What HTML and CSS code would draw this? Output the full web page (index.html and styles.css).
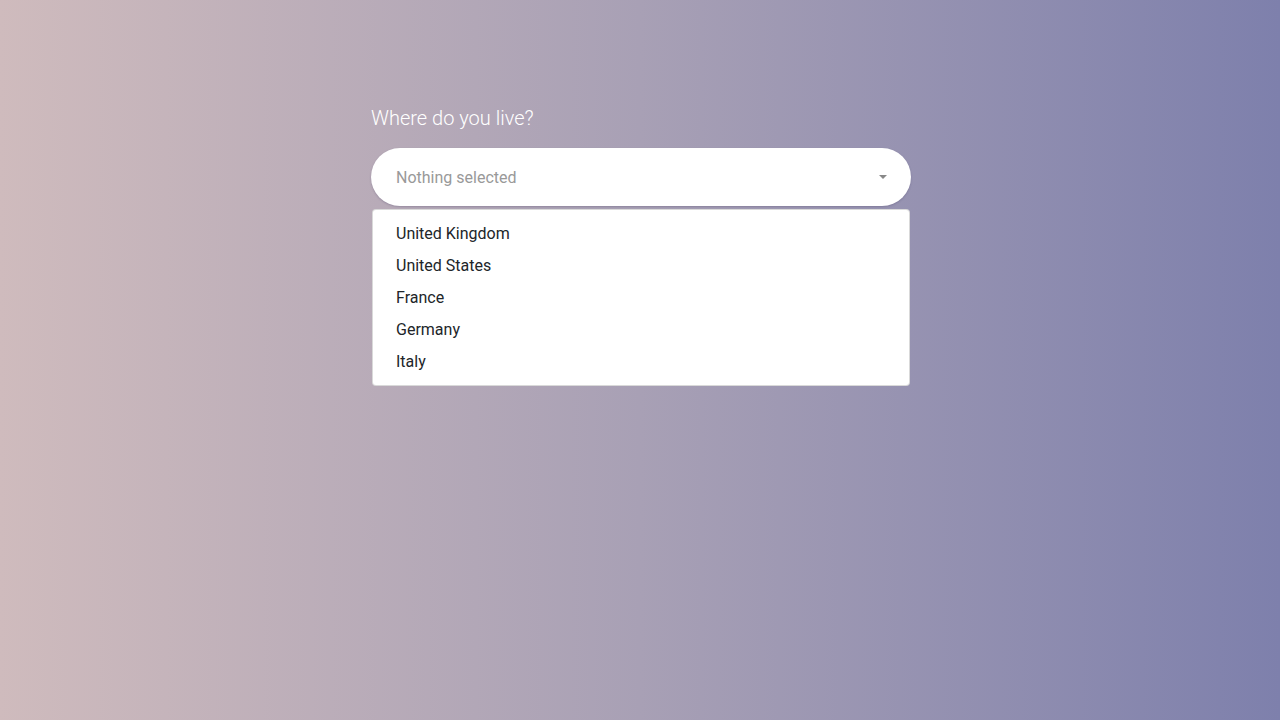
FILE: index.html
```html
<!DOCTYPE html>
<html>
<head>
<meta charset="utf-8">
<link rel="stylesheet" href="styles.css">
</head>
<body>
<main class="page">
  <div class="field">
    <label class="label">Where do you live?</label>
    <div class="select">
      <span class="placeholder">Nothing selected</span>
      <span class="caret"></span>
    </div>
    <ul class="menu">
      <li>United Kingdom</li>
      <li>United States</li>
      <li>France</li>
      <li>Germany</li>
      <li>Italy</li>
    </ul>
  </div>
</main>
</body>
</html>
```
FILE: styles.css
```css
html, body {
  margin: 0;
  height: 100%;
}
body {
  background: linear-gradient(to right, #cfbbbd 0%, #a8a0b5 50%, #7e80ac 100%);
  font-family: Roboto, "Noto Sans", sans-serif;
}
.page {
  display: flex;
  justify-content: center;
  padding-top: 104px;
}
.field {
  width: 540px;
  margin-left: 2px;
  display: flex;
  flex-direction: column;
}
.label {
  color: #fff;
  font-size: 20px;
  font-weight: 300;
  line-height: 28px;
  margin-bottom: 16px;
}
.select {
  height: 58px;
  background: #fff;
  border-radius: 29px;
  display: flex;
  align-items: center;
  justify-content: space-between;
  padding: 0 24px 0 25px;
  box-sizing: border-box;
  box-shadow: 0 1px 2px rgba(60, 50, 90, 0.25);
}
.placeholder {
  color: #999;
  font-size: 16px;
}
.caret {
  width: 0;
  height: 0;
  border-left: 4px solid transparent;
  border-right: 4px solid transparent;
  border-top: 4px solid #888;
}
.menu {
  list-style: none;
  margin: 3px 1px 0 1px;
  box-sizing: border-box;
  padding: 8px 0 7px;
  background: #fff;
  border: 1px solid rgba(0, 0, 0, 0.15);
  border-radius: 4px;
}
.menu li {
  height: 32px;
  line-height: 32px;
  padding-left: 23px;
  color: #212529;
  font-size: 16px;
}
```
